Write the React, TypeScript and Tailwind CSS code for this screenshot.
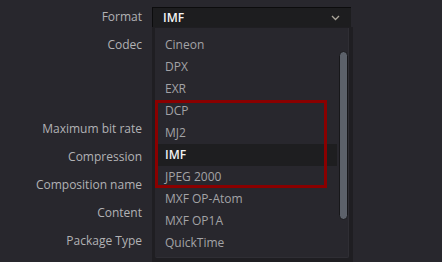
const labels = [
  "Format",
  "Codec",
  "",
  "",
  "Maximum bit rate",
  "Compression",
  "Composition name",
  "Content",
  "Package Type",
];

const options = [
  "Cineon",
  "DPX",
  "EXR",
  "DCP",
  "MJ2",
  "IMF",
  "JPEG 2000",
  "MXF OP-Atom",
  "MXF OP1A",
  "QuickTime",
];

function FormatMenu({ selected }: { selected: string }) {
  return (
    <div className="absolute left-[152px] top-[27px] w-[201px] h-[235px] bg-[#1f1e22] pl-[3px] pr-[4px] pb-[4px] pt-[1px]">
      <div className="relative h-full bg-[#28272d] rounded-b-[2px] border-r border-b border-[#2f2e34] pt-[6px]">
        {options.map((opt) => (
          <div
            key={opt}
            className={
              opt === selected
                ? "h-[22px] mr-[11px] pl-[10px] flex items-center bg-[#1e1e20] text-[#f2f2f2] font-semibold"
                : "h-[22px] mr-[11px] pl-[10px] flex items-center text-[#a3a3a6]"
            }
          >
            {opt}
          </div>
        ))}
        {/* scrollbar thumb */}
        <div className="absolute left-[184px] top-[23px] w-[9px] h-[169px] rounded-full bg-[#5c616a] border border-[#17171a]" />
        {/* highlight box */}
        <div className="absolute left-0 top-[72px] w-[172px] h-[88px] border-[3px] border-[#8a0000]" />
      </div>
    </div>
  );
}

export default function App() {
  return (
    <div
      className="relative w-[442px] h-[262px] overflow-hidden bg-[#28272d] text-[12px]"
      style={{ fontFamily: '"Open Sans", "Noto Sans", sans-serif' }}
    >
      <div className="flex pt-[3px]">
        <div className="w-[142px] flex flex-col text-right text-[#b2b2b5]">
          {labels.map((l, i) => (
            <div key={i} className="h-[28px] leading-[28px]">
              {l}
            </div>
          ))}
        </div>
        <div className="ml-[10px] pt-[4px]">
          <div className="w-[199px] h-[20px] bg-[#1d1d1f] border-t border-l border-[#0c0c0d] flex items-center justify-between pl-[10px] pr-[11px]">
            <span className="text-[#f4f4f4] font-semibold">IMF</span>
            <svg width="9" height="6" viewBox="0 0 9 6" fill="none">
              <path d="M1 1l3.5 3.5L8 1" stroke="#aaa59a" strokeWidth="1.3" />
            </svg>
          </div>
        </div>
      </div>
      <FormatMenu selected="IMF" />
    </div>
  );
}
